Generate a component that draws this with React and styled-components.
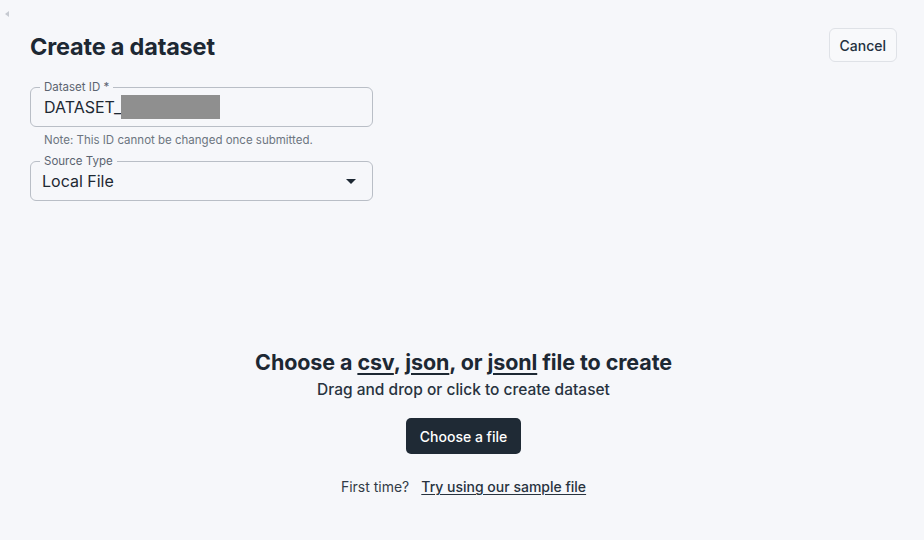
import React from "react";
import styled, { createGlobalStyle } from "styled-components";

const GlobalStyle = createGlobalStyle`
  html, body {
    margin: 0;
    padding: 0;
    background: #f6f7fa;
    font-family: Inter, "Noto Sans", sans-serif;
    color: #1d2833;
  }
`;

const Page = styled.div`
  position: relative;
  width: 924px;
  height: 540px;
  box-sizing: border-box;
  padding: 28px 27px 0 30px;
  display: flex;
  flex-direction: column;
`;

const CollapseArrow = styled.div`
  position: absolute;
  left: 5px;
  top: 11px;
  width: 0;
  height: 0;
  border-top: 3px solid transparent;
  border-bottom: 3px solid transparent;
  border-right: 4px solid #c6cad1;
`;

const Header = styled.div`
  display: flex;
  justify-content: space-between;
  align-items: flex-start;
`;

const Title = styled.h1`
  margin: 4px 0 0;
  font-size: 23.5px;
  font-weight: 700;
  letter-spacing: -0.2px;
  line-height: 30px;
`;

const CancelButton = styled.button`
  height: 34px;
  padding: 0 10px;
  border: 1px solid #dfe2e7;
  border-radius: 6px;
  background: #f8f9fb;
  font-family: inherit;
  font-size: 14px;
  font-weight: 500;
  color: #243140;
`;

const Form = styled.div`
  width: 343px;
  display: flex;
  flex-direction: column;
  margin-top: 25px;
`;

const Field = styled.div`
  position: relative;
  padding: 0 12px 0 ${(p) => p.$inset}px;
  height: 40px;
  box-sizing: border-box;
  border: 1px solid #b9bec6;
  border-radius: 6px;
  display: flex;
  align-items: center;
`;

const Legend = styled.span`
  position: absolute;
  top: -8px;
  left: 9px;
  padding: 0 4px;
  background: #f6f7fa;
  font-size: 11.5px;
  line-height: 14px;
  color: #5b6470;
`;

const Value = styled.span`
  font-size: 16px;
  color: #1d2833;
  flex: 1;
  display: flex;
  align-items: center;
`;

const Redacted = styled.span`
  display: inline-block;
  width: 99px;
  height: 24px;
  background: #8f8f8f;
`;

const Note = styled.div`
  margin: 6px 0 14px 14px;
  font-size: 11.5px;
  line-height: 14px;
  color: #6c7580;
`;

const Caret = styled.span`
  width: 0;
  height: 0;
  border-left: 5px solid transparent;
  border-right: 5px solid transparent;
  border-top: 5px solid #1d2833;
  margin-right: 4px;
`;

const DropZone = styled.div`
  display: flex;
  flex-direction: column;
  align-items: center;
  margin-top: 147px;
`;

const DropTitle = styled.h2`
  margin: 0;
  font-size: 21.5px;
  font-weight: 700;
  line-height: 28px;
  letter-spacing: -0.1px;
`;

const Ext = styled.span`
  text-decoration: underline;
  text-underline-offset: 3px;
  text-decoration-thickness: 2px;
`;

const DropHint = styled.div`
  margin-top: 4px;
  font-size: 15.5px;
  font-weight: 500;
  line-height: 20px;
  color: #28333f;
`;

const ChooseButton = styled.button`
  margin-top: 18px;
  height: 36px;
  padding: 0 14px;
  border: none;
  border-radius: 5px;
  background: #1f2a35;
  color: #ffffff;
  font-family: inherit;
  font-size: 14px;
  font-weight: 500;
`;

const FirstTime = styled.div`
  margin-top: 24px;
  font-size: 14px;
  color: #333c47;
  display: flex;
  gap: 12px;
`;

const SampleLink = styled.a`
  color: #28333f;
  font-weight: 500;
  text-decoration: underline;
  text-underline-offset: 2px;
`;

export default function App() {
  return (
    <>
      <GlobalStyle />
      <Page>
        <CollapseArrow />
        <Header>
          <Title>Create a dataset</Title>
          <CancelButton>Cancel</CancelButton>
        </Header>
        <Form>
          <Field $inset={13}>
            <Legend>Dataset ID *</Legend>
            <Value>
              DATASET_
              <Redacted />
            </Value>
          </Field>
          <Note>Note: This ID cannot be changed once submitted.</Note>
          <Field $inset={11}>
            <Legend>Source Type</Legend>
            <Value>Local File</Value>
            <Caret />
          </Field>
        </Form>
        <DropZone>
          <DropTitle>
            Choose a <Ext>csv</Ext>, <Ext>json</Ext>, or <Ext>jsonl</Ext> file
            to create
          </DropTitle>
          <DropHint>Drag and drop or click to create dataset</DropHint>
          <ChooseButton>Choose a file</ChooseButton>
          <FirstTime>
            <span>First time?</span>
            <SampleLink href="#">Try using our sample file</SampleLink>
          </FirstTime>
        </DropZone>
      </Page>
    </>
  );
}
